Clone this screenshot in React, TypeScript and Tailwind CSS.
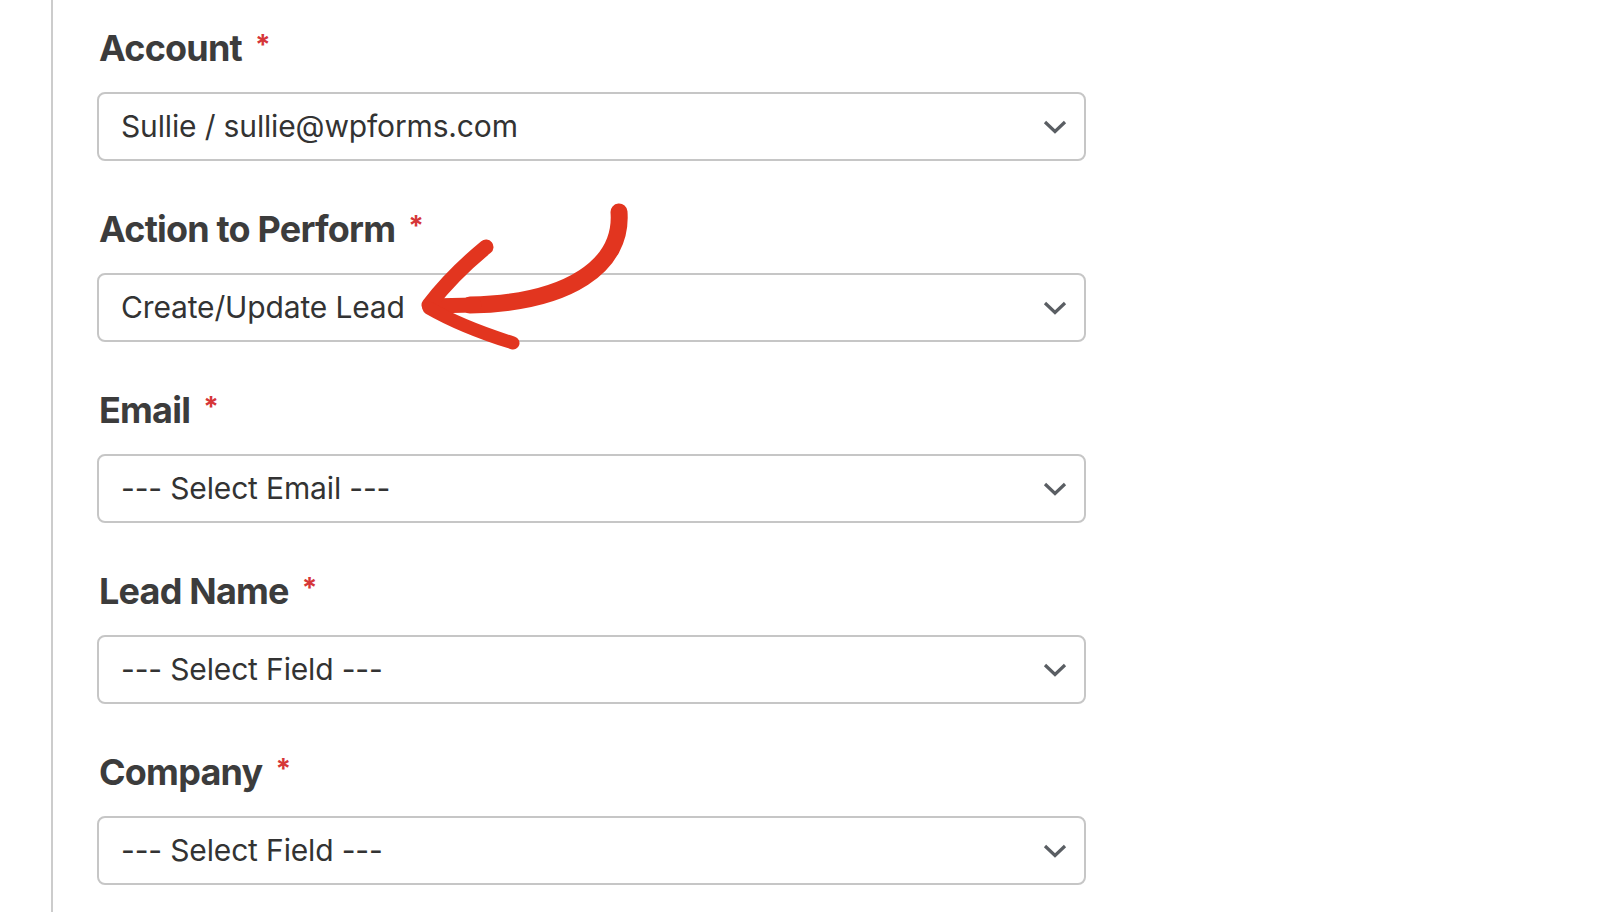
import React from 'react'

const fields = [
  { label: 'Account', value: 'Sullie / sullie@wpforms.com' },
  { label: 'Action to Perform', value: 'Create/Update Lead' },
  { label: 'Email', value: '--- Select Email ---' },
  { label: 'Lead Name', value: '--- Select Field ---' },
  { label: 'Company', value: '--- Select Field ---' },
]

const Chevron = () => (
  <svg width="24" height="14" viewBox="0 0 24 14" fill="none">
    <path d="M2 2 L12 11.5 L22 2" stroke="#5a5e63" strokeWidth="3.2" />
  </svg>
)

const Field: React.FC<{ label: string; value: string }> = ({ label, value }) => (
  <div className="flex flex-col">
    <div className="h-[44px] text-[36px] leading-[44px] font-bold tracking-[-0.8px] text-[#3c3c3c] pl-[2px] whitespace-nowrap">
      {label}
      <span className="ml-[13px] text-[28px] align-top relative top-[-3px] text-[#d63638]">*</span>
    </div>
    <div className="mt-[22px] h-[69px] w-[989px] border-2 border-[#c6c6c6] rounded-[8px] bg-white flex items-center justify-between pl-[22px] pr-[17px]">
      <span className="text-[30px] tracking-[-0.15px] text-[#333333]">{value}</span>
      <Chevron />
    </div>
  </div>
)

export default function App() {
  return (
    <div className="relative min-h-screen h-[912px] bg-white overflow-hidden" style={{ fontFamily: 'Inter, "Noto Sans", sans-serif' }}>
      <div className="ml-[51px] h-full border-l-2 border-[#cccccc] pl-[44px] pt-[26px] flex flex-col gap-[46px]">
        {fields.map((f) => (
          <Field key={f.label} label={f.label} value={f.value} />
        ))}
      </div>

      {/* hand-drawn arrow annotation */}
      <svg className="absolute left-[410px] top-[195px]" width="230" height="165" viewBox="0 0 230 165" fill="none">
        <path d="M209 17 C213 70 160 108 60 110" stroke="#e2351f" strokeWidth="17" strokeLinecap="round" />
        <path d="M64 110 L20 111" stroke="#e2351f" strokeWidth="15" strokeLinecap="round" />
        <path d="M76 52 Q42 80 19 110" stroke="#e2351f" strokeWidth="15" strokeLinecap="round" />
        <path d="M19 113 Q52 132 103 148" stroke="#e2351f" strokeWidth="13" strokeLinecap="round" />
      </svg>
    </div>
  )
}
